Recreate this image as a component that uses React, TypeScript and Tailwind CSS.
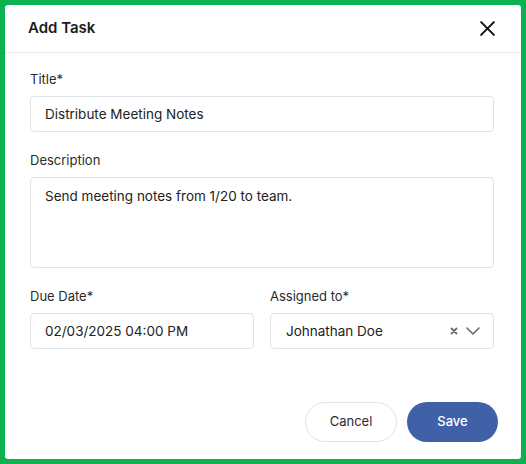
import React from "react";

const font = { fontFamily: "Inter, 'Noto Sans', sans-serif" };

function Field({ label, children }: { label: string; children: React.ReactNode }) {
  return (
    <div className="flex flex-col">
      <div className="text-[13px] leading-5 text-[#2b2b2b] mb-[7px]">{label}</div>
      {children}
    </div>
  );
}

export default function App() {
  return (
    <div className="w-[526px] h-[464px] bg-[#0db14f] p-[5px]" style={font}>
      <div className="w-full h-full bg-white rounded-[3px] flex flex-col">
        <div className="h-[48px] flex items-center justify-between pl-[23px] pr-[25px] border-b border-[#e6e9f0]">
          <span className="text-[15px] font-semibold text-[#1c1c1c]">Add Task</span>
          <svg width="17" height="17" viewBox="0 0 16 16" fill="none" stroke="#111" strokeWidth="1.9" strokeLinecap="round">
            <path d="M2 2L14 14M14 2L2 14" />
          </svg>
        </div>
        <div className="flex flex-col pl-[25px] pr-[27px] pt-[16px] gap-[18px]">
          <Field label="Title*">
            <div className="h-[36px] border border-[#dfe3ea] rounded-[4px] flex items-center px-[14px] text-[13.5px] text-[#222]">
              Distribute Meeting Notes
            </div>
          </Field>
          <Field label="Description">
            <div className="h-[91px] border border-[#dfe3ea] rounded-[4px] px-[14px] pt-[8px] text-[13.5px] leading-5 text-[#222]">
              Send meeting notes from 1/20 to team.
            </div>
          </Field>
          <div className="grid grid-cols-2 gap-[16px]">
            <Field label="Due Date*">
              <div className="h-[36px] border border-[#dfe3ea] rounded-[4px] flex items-center px-[14px] text-[13.5px] text-[#222]">
                02/03/2025 04:00 PM
              </div>
            </Field>
            <Field label="Assigned to*">
              <div className="h-[36px] border border-[#dfe3ea] rounded-[4px] flex items-center pl-[15px] pr-[13px] text-[13.5px] text-[#222]">
                <span className="flex-1">Johnathan Doe</span>
                <svg width="8" height="8" viewBox="0 0 8 8" stroke="#6b6b6b" strokeWidth="1.8" strokeLinecap="round">
                  <path d="M1.5 1.5L6.5 6.5M6.5 1.5L1.5 6.5" />
                </svg>
                <svg className="ml-[8px]" width="14" height="8" viewBox="0 0 14 8" fill="none" stroke="#6b6b6b" strokeWidth="1.6" strokeLinecap="round" strokeLinejoin="round">
                  <path d="M1 1L7 7L13 1" />
                </svg>
              </div>
            </Field>
          </div>
        </div>
        <div className="mt-auto flex justify-end gap-[10px] pr-[23px] pb-[17px]">
          <button className="w-[92px] h-[40px] rounded-full border border-[#dfe3ea] bg-white text-[13px] text-[#2b2b2b]">
            Cancel
          </button>
          <button className="w-[91px] h-[40px] rounded-full bg-[#4061a8] text-[13px] font-medium text-white">
            Save
          </button>
        </div>
      </div>
    </div>
  );
}
